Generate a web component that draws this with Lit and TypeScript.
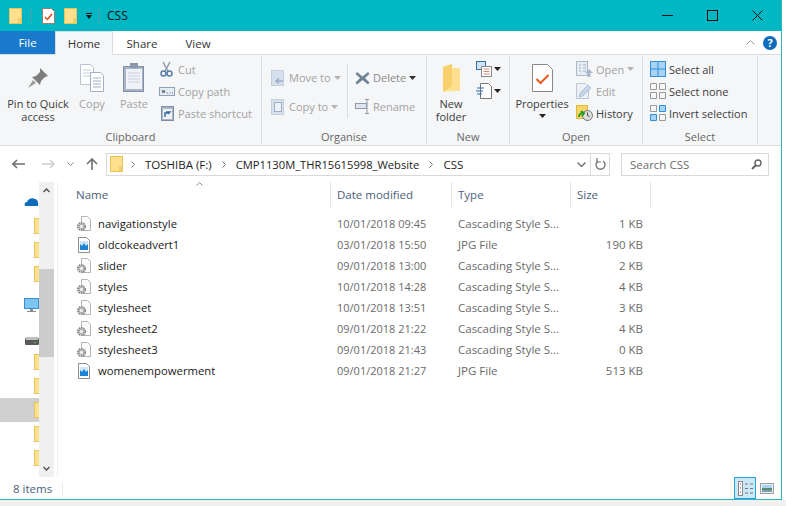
import { LitElement, html, css, svg } from 'lit'
import { customElement } from 'lit/decorators.js'

const icon = (w: number, h: number, body: unknown) => html`<svg class="ic" width=${w} height=${h} viewBox="0 0 ${w} ${h}">${body}</svg>`

const folderFlat = (w = 13, h = 16) => icon(w, h, svg`
  <rect x=".5" y=".5" width=${w - 1} height=${h - 1} fill="#ffe08f" stroke="#e9c35a"/>
  <rect x=${w - 4} y=${h - 6} width="3" height="5" fill="#f3cf6b"/>`)

const gearFile = icon(16, 16, svg`
  <path d="M5.500.5h6l3 3v11h-9z" fill="#fbfbfb" stroke="#b4b4b4"/>
  <circle cx="5.500" cy="10.500" r="3.600" fill="none" stroke="#8b8b8b" stroke-width="2" stroke-dasharray="1.600 .7"/>
  <circle cx="5.500" cy="10.500" r="2.400" fill="#e8e8e8" stroke="#8f8f8f" stroke-width=".8"/>`)

const jpgFile = icon(16, 16, svg`
  <path d="M2.500.5h8l3 3v12h-11z" fill="#fff" stroke="#8e8e8e"/>
  <rect x="4" y="4" width="8" height="9" fill="#1b82d6"/>
  <path d="M4 7l2 2 2-3 2 3 2-2v-3h-8z" fill="#cfe7fa"/>`)

const files = [
  { name: 'navigationstyle', date: '10/01/2018 09:45', type: 'Cascading Style S...', size: '1 KB', ic: gearFile },
  { name: 'oldcokeadvert1', date: '03/01/2018 15:50', type: 'JPG File', size: '190 KB', ic: jpgFile },
  { name: 'slider', date: '09/01/2018 13:00', type: 'Cascading Style S...', size: '2 KB', ic: gearFile },
  { name: 'styles', date: '10/01/2018 14:28', type: 'Cascading Style S...', size: '4 KB', ic: gearFile },
  { name: 'stylesheet', date: '10/01/2018 13:51', type: 'Cascading Style S...', size: '3 KB', ic: gearFile },
  { name: 'stylesheet2', date: '09/01/2018 21:22', type: 'Cascading Style S...', size: '4 KB', ic: gearFile },
  { name: 'stylesheet3', date: '09/01/2018 21:43', type: 'Cascading Style S...', size: '0 KB', ic: gearFile },
  { name: 'womenempowerment', date: '09/01/2018 21:27', type: 'JPG File', size: '513 KB', ic: jpgFile },
]

const caret = (c = '#333') => icon(7, 4, svg`<path d="M0 0h7l-3.500 4z" fill=${c}/>`)

@customElement('app-root')
export class AppRoot extends LitElement {
  static styles = css`
    :host { display: block; width: 786px; height: 506px; background: #fff; font-family: "Open Sans", "Noto Sans", sans-serif; overflow: hidden; }
    .ic { display: block; flex: none; }
    .win { width: 782px; height: 500px; box-sizing: border-box; border-right: 1px solid #2bb5c4; border-bottom: 1px solid #2bb5c4; display: flex; flex-direction: column; background: #fff; }
    .bottom { height: 6px; background: #f0f0f0; }

    .title { height: 31px; flex: none; background: #00b7c3; display: flex; align-items: center; padding-left: 9px; color: #111; font-size: 12px; }
    .qsep { width: 1px; height: 13px; background: #5c9ea6; }
    .ctrls { margin-left: auto; display: flex; align-items: center; gap: 34px; padding-right: 18px; }

    .tabs { height: 23px; flex: none; display: flex; font-size: 11.5px; color: #333; position: relative; z-index: 1; }
    .tab { display: flex; align-items: center; justify-content: center; height: 24px; box-sizing: border-box; }
    .file { width: 55px; background: #1979ca; color: #fff; height: 23px; }
    .home { width: 58px; background: #f5f6f7; border: 1px solid #dadbdc; border-width: 0 1px 0 1px; box-shadow: inset 0 1px 0 #dadbdc; }
    .share { width: 58px; }
    .view { width: 54px; }
    .tabr { margin-left: auto; display: flex; align-items: center; gap: 8px; padding-right: 4px; height: 23px; }
    .help { width: 14px; height: 14px; border-radius: 50%; background: #0f6cbd; color: #fff; font-size: 11px; font-weight: 700; display: flex; align-items: center; justify-content: center; }

    .ribbon { height: 92px; flex: none; box-sizing: border-box; background: #f5f6f7; border-top: 1px solid #dadbdc; border-bottom: 1px solid #dadbdc; display: flex; font-size: 11px; color: #3c3c3c; }
    .group { display: flex; flex-direction: column; border-right: 1px solid #dadbdc; margin: 2px 0 1px; box-sizing: border-box; }
    .gbody { flex: 1; display: flex; min-height: 0; }
    .glabel { height: 14px; text-align: center; color: #666; line-height: 14px; }
    .big { display: flex; flex-direction: column; align-items: center; text-align: center; line-height: 13px; padding-top: 7px; white-space: nowrap; }
    .big .slot { height: 28px; display: flex; align-items: flex-end; justify-content: center; margin-bottom: 5px; }
    .off { color: #a2a2a2; }
    .stack { display: flex; flex-direction: column; padding-top: 1px; }
    .small { height: 22px; display: flex; align-items: center; gap: 3px; white-space: nowrap; }
    .small.tall { height: 29px; }
    .vsep { width: 1px; background: #dadbdc; margin: 7px 0 12px; flex: none; }

    .addr { height: 36px; flex: none; display: flex; align-items: center; padding: 0 0 0 12px; font-size: 11.5px; color: #222; }
    .box { height: 23px; box-sizing: border-box; border: 1px solid #d9d9d9; display: flex; align-items: center; flex: none; }
    .pathbox { width: 504px; margin-left: 8px; padding-left: 3px; }
    .search { width: 148px; margin-left: 11px; padding: 0 6px 0 8px; justify-content: space-between; color: #6d6d6d; }
    .crumbsep { margin: 0 10px; }
    .narrow { font-size: 11.2px; }

    .main { flex: 1; display: flex; min-height: 0; }
    .nav { width: 58px; flex: none; display: flex; box-sizing: border-box; border-right: 1px solid #f0f0f0; padding-right: 2px; }
    .tree { width: 39px; flex: none; overflow: hidden; display: flex; flex-direction: column; padding-top: 8px; box-sizing: border-box; }
    .tn { height: 24px; flex: none; display: flex; align-items: center; justify-content: flex-end; }
    .tn svg { margin-right: -8px; }
    .tn.wide svg { margin-right: 0; }
    .tn.sel { background: #d0d0d0; }
    .tn.mt { margin-top: 8px; }
    .tn.mt2 { margin-top: 11px; }
    .tn.mb { margin-bottom: -3px; }
    .sb { width: 15px; flex: none; background: #f0f0f0; display: flex; flex-direction: column; align-items: center; }
    .sbarrow { height: 17px; flex: none; display: flex; align-items: center; justify-content: center; }
    .sbtrack { flex: 1; width: 100%; padding-top: 70px; box-sizing: border-box; }
    .thumb { height: 88px; background: #cdcdcd; }

    .list { flex: 1; font-size: 11.5px; color: #6a6a6a; position: relative; }
    .cols { display: grid; grid-template-columns: 273px 121px 119px 80px; }
    .head { height: 25px; color: #4c607a; font-size: 11.5px; }
    .head > div { border-right: 1px solid #e5e5e5; padding-left: 6px; display: flex; align-items: center; box-sizing: border-box; }
    .head > div:first-child { padding-left: 18px; }
    .sort { position: absolute; left: 138px; top: 0; }
    .rows { padding-top: 6px; }
    .row { height: 21px; align-items: center; }
    .row > div { padding-left: 6px; white-space: nowrap; }
    .row .dt { font-size: 11px; }
    .row .nm { padding-left: 18px; display: flex; align-items: center; gap: 6px; color: #1a1a1a; font-size: 11.3px; }
    .row .sz { text-align: right; padding: 0 8px 0 0; }

    .status { height: 22px; flex: none; display: flex; align-items: center; font-size: 11.5px; color: #4c607a; padding-left: 13px; }
    .ssep { width: 1px; height: 13px; background: #ececec; margin-left: 10px; }
    .views { margin-left: auto; display: flex; align-items: flex-end; height: 100%; padding-right: 7px; gap: 4px; }
    .vbtn { width: 22px; height: 22px; box-sizing: border-box; border: 1px solid #26a0da; background: #cbe8f6; display: flex; align-items: center; justify-content: center; }
    .vthumb { height: 22px; display: flex; align-items: center; }
  `

  render() {
    return html`
      <div class="win">
        ${this.titleBar()}
        ${this.tabs()}
        ${this.ribbon()}
        ${this.addressBar()}
        <div class="main">
          ${this.navPane()}
          ${this.fileList()}
        </div>
        ${this.statusBar()}
      </div>
      <div class="bottom"></div>
    `
  }

  titleBar() {
    return html`<div class="title">
      ${folderFlat()}
      <div class="qsep" style="margin:0 11px 0 8px"></div>
      ${icon(13, 16, svg`<path d="M.5.5h9l3 3v12h-12z" fill="#fff" stroke="#9a7b70"/><path d="M3 9l2.500 2.500L10 6" fill="none" stroke="#e2491a" stroke-width="1.500"/>`)}
      <div style="width:9px"></div>
      ${folderFlat()}
      <div style="width:9px"></div>
      ${icon(6, 6, svg`<path d="M0 0h6v1h-6zM0 2h6l-3 4z" fill="#111"/>`)}
      <div class="qsep" style="margin:0 7px 0 7px"></div>
      <span>CSS</span>
      <div class="ctrls">
        ${icon(11, 1, svg`<rect width="11" height="1" fill="#111"/>`)}
        ${icon(11, 11, svg`<rect x=".5" y=".5" width="10" height="10" fill="none" stroke="#111"/>`)}
        ${icon(11, 11, svg`<path d="M.5.5l10 10M10.500.5l-10 10" stroke="#111" fill="none"/>`)}
      </div>
    </div>`
  }

  tabs() {
    return html`<div class="tabs">
      <div class="tab file">File</div>
      <div class="tab home">Home</div>
      <div class="tab share">Share</div>
      <div class="tab view">View</div>
      <div class="tabr">
        ${icon(9, 5, svg`<path d="M.5 4.500l4-4 4 4" fill="none" stroke="#9a9a9a"/>`)}
        <div class="help">?</div>
      </div>
    </div>`
  }

  ribbon() {
    return html`<div class="ribbon">
      <div class="group" style="width:262px">
        <div class="gbody">
          <div class="big" style="width:76px">
            <div class="slot" style="align-items:center">${icon(22, 22, svg`<path d="M13 1l8 8-3 1-4 4-1 4-8-8 4-1 4-4z" fill="#7d7d7d"/><path d="M6 13l-5 8 8-5z" fill="#9a9a9a"/>`)}</div>
            Pin to Quick<br />access
          </div>
          <div class="big off" style="width:32px">
            <div class="slot">${icon(25, 28, svg`<path d="M.5.5h10l3 3v17h-13z" fill="#fff" stroke="#b9c4d6"/><path d="M3 6h8M3 9h8M3 12h8" stroke="#c6d0de"/><path d="M10.500 8.500h10l3 3v16h-13z" fill="#fff" stroke="#9fb0c9"/><path d="M13 14h8M13 17h8M13 20h8M13 23h8" stroke="#9fb0c9"/>`)}</div>
            Copy
          </div>
          <div class="big off" style="width:52px">
            <div class="slot">${icon(22, 29, svg`<rect x=".5" y="3.500" width="20" height="25" fill="#a9b4c6" stroke="#7f8ea6"/><rect x="3" y="6" width="16" height="20" fill="#f0f2f7"/><path d="M5 10h12M5 13h12M5 16h12M5 19h12" stroke="#c8d0de"/><rect x="7" y="0" width="8" height="5" fill="#8b97aa"/>`)}</div>
            Paste
          </div>
          <div class="stack off" style="margin-left:-1px">
            <div class="small">${icon(16, 16, svg`<path d="M4 1l5 9M11 1l-5 9" stroke="#8f9aa8" stroke-width="1.500" fill="none"/><circle cx="4.500" cy="12.500" r="2.500" fill="none" stroke="#5a7ea6" stroke-width="1.500"/><circle cx="10.500" cy="12.500" r="2.500" fill="none" stroke="#5a7ea6" stroke-width="1.500"/>`)}<span>Cut</span></div>
            <div class="small">${icon(16, 9, svg`<rect x=".5" y=".5" width="15" height="8" fill="#e6ecf4" stroke="#8fa0b6"/><path d="M3 3l1 3 1-3 1 3M8 6h1M10.500 6h1M13 6h1" stroke="#5f7590" fill="none"/>`)}<span>Copy path</span></div>
            <div class="small">${icon(16, 16, svg`<rect x="2.500" y="1.500" width="12" height="14" fill="#a9b4c6" stroke="#7f8ea6"/><rect x="4" y="4" width="9" height="10" fill="#f0f2f7"/><path d="M6 12V8h4M7 7l4 0-2 2" fill="none" stroke="#3a6ea5" stroke-width="1.500"/>`)}<span>Paste shortcut</span></div>
          </div>
        </div>
        <div class="glabel">Clipboard</div>
      </div>
      <div class="group" style="width:165px">
        <div class="gbody">
          <div class="stack off" style="width:76px;padding:6px 0 0 9px;box-sizing:content-box">
            <div class="small tall">${icon(13, 16, svg`<rect x=".5" y=".5" width="12" height="15" fill="#d6e0ec" stroke="#c3cfde"/><path d="M12 11H6M8 8.500l-3 2.500 3 2.500" fill="none" stroke="#9aaec6" stroke-width="1.500"/>`)}<span style="margin-left:2px">Move to</span>${caret('#b5b5b5')}</div>
            <div class="small tall">${icon(13, 16, svg`<rect x=".5" y=".5" width="12" height="15" fill="#d6e0ec" stroke="#c3cfde"/><rect x="3.500" y="3.500" width="7" height="9" fill="#eef2f7" stroke="#9aaec6"/>`)}<span style="margin-left:2px">Copy to</span>${caret('#b5b5b5')}</div>
          </div>
          <div class="vsep"></div>
          <div class="stack" style="padding:6px 0 0 7px">
            <div class="small tall">${icon(15, 14, svg`<path d="M2 1l5.500 4.500L13 1l1.500 2-4.500 4 4.500 4.500-1.500 2-5.500-4.500L2 13.500 .5 11.500 5 7 .5 3z" fill="#6f8296"/>`)}<span style="color:#8a8a8a">Delete</span>${caret('#333')}</div>
            <div class="small tall off">${icon(15, 15, svg`<rect x=".5" y="4.500" width="11" height="5" fill="#dfe5ec" stroke="#8f9aa8"/><path d="M10 .5h4M12 .5v14M10 14.500h4" stroke="#8f9aa8" fill="none"/>`)}<span>Rename</span></div>
          </div>
        </div>
        <div class="glabel">Organise</div>
      </div>
      <div class="group" style="width:83px">
        <div class="gbody">
          <div class="big" style="width:48px">
            <div class="slot">${icon(19, 28, svg`<path d="M1 3l9-3v4h8v23H7l-6 1z" fill="#ffe08f"/><path d="M10 0v22l-9 6V3z" fill="#f7cf6b"/>`)}</div>
            New<br />folder
          </div>
          <div class="stack" style="padding-left:1px">
            <div class="small" style="gap:2px">${icon(16, 16, svg`<rect x=".5" y=".5" width="9" height="8" fill="#cfe3f7" stroke="#3a6ea5"/><rect x="5.500" y="5.500" width="10" height="10" fill="#fff" stroke="#888"/><path d="M7.500 8h6M7.500 10.500h6M7.500 13h6" stroke="#d98a7a"/>`)}${caret('#222')}</div>
            <div class="small" style="gap:2px">${icon(16, 16, svg`<path d="M4.500.5h8l3 3v12h-11z" fill="#fff" stroke="#777"/><path d="M1 5h7M0 8h7M1 11h5" stroke="#2a6aa8"/>`)}${caret('#222')}</div>
          </div>
        </div>
        <div class="glabel">New</div>
      </div>
      <div class="group" style="width:133px">
        <div class="gbody">
          <div class="big" style="width:64px">
            <div class="slot">${icon(21, 28, svg`<path d="M.5.5h15l5 5v22h-20z" fill="#fff" stroke="#8a8a8a"/><path d="M4.500 15l4 4 8-8" fill="none" stroke="#e8591c" stroke-width="2"/>`)}</div>
            Properties
            <div style="margin-top:4px">${caret('#222')}</div>
          </div>
          <div class="stack" style="padding-left:2px">
            <div class="small off">${icon(17, 16, svg`<rect x=".5" y=".5" width="11" height="14" fill="#e8edf4" stroke="#a9b8cb"/><path d="M3 4h2M7 4h3M3 7h2M7 7h3M3 10h2M7 10h3" stroke="#9fb0c5"/><path d="M13 8l4 4h-2.500v4h-3v-4H9z" fill="#a9b8cb"/>`)}<span>Open</span>${caret('#b5b5b5')}</div>
            <div class="small off">${icon(17, 16, svg`<path d="M.5.5h9l3 3v12h-12z" fill="#eef2f7" stroke="#b9c6d8"/><path d="M3 14l1-4 8-8 3 3-8 8z" fill="#c6d6e8" stroke="#9fb5cf" stroke-width=".7"/>`)}<span>Edit</span></div>
            <div class="small">${icon(17, 16, svg`<rect x=".5" y=".5" width="11" height="13" fill="#f7d768" stroke="#e0b93f"/><circle cx="11.500" cy="10.500" r="5" fill="#ddd" stroke="#777"/><path d="M11.500 7.500v3l2 1" stroke="#444" fill="none"/><path d="M3 12a4 4 0 0 1 5-4M5 6l3 2-2 3" fill="none" stroke="#2a9a2a" stroke-width="2"/>`)}<span>History</span></div>
          </div>
        </div>
        <div class="glabel">Open</div>
      </div>
      <div class="group" style="width:115px">
        <div class="gbody">
          <div class="stack" style="padding-left:7px">
            <div class="small">${icon(16, 16, svg`<rect x=".5" y=".5" width="15" height="15" fill="#a9d3f5" stroke="#2f8fdc"/><path d="M8 0v16M0 8h16" stroke="#2f8fdc"/>`)}<span>Select all</span></div>
            <div class="small">${icon(16, 16, svg`<path d="M.5.5h6v6h-6zM9.500.5h6v6h-6zM.5 9.500h6v6h-6zM9.500 9.500h6v6h-6z" fill="none" stroke="#9a9a9a"/>`)}<span>Select none</span></div>
            <div class="small">${icon(16, 16, svg`<path d="M.5.500h6v6h-6zM9.500 9.500h6v6h-6z" fill="none" stroke="#9a9a9a"/><path d="M9.500.5h6v6h-6zM.5 9.500h6v6h-6z" fill="#a9d3f5" stroke="#2f8fdc"/>`)}<span>Invert selection</span></div>
          </div>
        </div>
        <div class="glabel">Select</div>
      </div>
    </div>`
  }

  addressBar() {
    const chev = html`<span class="crumbsep">${icon(4, 7, svg`<path d="M.5.5l3 3-3 3" fill="none" stroke="#777"/>`)}</span>`
    return html`<div class="addr">
      ${icon(13, 10, svg`<path d="M13 5H1M5 1L1 5l4 4" fill="none" stroke="#6f6f6f" stroke-width="1.600"/>`)}
      <div style="width:17px"></div>
      ${icon(13, 10, svg`<path d="M0 5h12M8 1l4 4-4 4" fill="none" stroke="#d0d0d0" stroke-width="1.600"/>`)}
      <div style="width:12px"></div>
      ${icon(7, 4, svg`<path d="M.5.5l3 3 3-3" fill="none" stroke="#8a8a8a"/>`)}
      <div style="width:12px"></div>
      ${icon(12, 12, svg`<path d="M6 12V1M1 6l5-5 5 5" fill="none" stroke="#6f6f6f" stroke-width="1.600"/>`)}
      <div class="box pathbox">
        ${folderFlat(13, 16)}
        <span style="width:0;margin-left:-2px"></span>
        ${chev}<span>TOSHIBA (F:)</span>
        ${chev}<span class="narrow">CMP1130M_THR15615998_Website</span>
        ${chev}<span>CSS</span>
        <span style="margin-left:auto;display:flex;align-items:center;height:100%">
          ${icon(9, 5, svg`<path d="M.5.5l4 4 4-4" fill="none" stroke="#666" stroke-width="1.200"/>`)}
          <span style="width:1px;height:100%;background:#d9d9d9;margin:0 4px"></span>
          ${icon(11, 12, svg`<path d="M3 3a4.500 4.500 0 1 0 5 0" fill="none" stroke="#777" stroke-width="1.400"/><path d="M2 0v4h4" fill="none" stroke="#777" stroke-width="1.200"/>`)}
          <span style="width:3px"></span>
        </span>
      </div>
      <div class="box search">
        <span>Search CSS</span>
        ${icon(11, 11, svg`<circle cx="7" cy="4" r="3" fill="none" stroke="#666" stroke-width="1.400"/><path d="M5 6l-4 4" stroke="#666" stroke-width="2"/>`)}
      </div>
    </div>`
  }

  navPane() {
    const folder = icon(13, 16, svg`<rect x=".5" y=".5" width="12" height="15" fill="#ffe08f" stroke="#e9c35a"/>`)
    return html`<div class="nav">
      <div class="tree">
        <div class="tn wide">${icon(15, 10, svg`<path d="M1 9c-1-2 0-4 2-4 1-3 5-5 8-3 2 0 4 3 3 7z" fill="#0f6cbd"/>`)}</div>
        <div class="tn">${folder}</div>
        <div class="tn">${folder}</div>
        <div class="tn">${folder}</div>
        <div class="tn mt wide">${icon(15, 16, svg`<rect x=".5" y=".5" width="14" height="10" fill="#7cc4f2" stroke="#3a90cf"/><rect x="6" y="11" width="3" height="2" fill="#8a8a8a"/><rect x="3" y="13" width="9" height="1" fill="#8a8a8a"/>`)}</div>
        <div class="tn mt2 mb wide">${icon(14, 8, svg`<rect x="0" y="1" width="14" height="7" rx="1" fill="#5a5a5a"/><rect x="1" y="0" width="12" height="3" fill="#c0c0c0"/><rect x="9" y="5" width="2" height="1" fill="#4cd04c"/>`)}</div>
        <div class="tn">${folder}</div>
        <div class="tn">${folder}</div>
        <div class="tn sel">${folder}</div>
        <div class="tn">${folder}</div>
        <div class="tn">${folder}</div>
      </div>
      <div class="sb">
        <div class="sbarrow">${icon(7, 5, svg`<path d="M.5 4l3-3 3 3" fill="none" stroke="#555" stroke-width="1.500"/>`)}</div>
        <div class="sbtrack"><div class="thumb"></div></div>
        <div class="sbarrow">${icon(7, 5, svg`<path d="M.5 1l3 3 3-3" fill="none" stroke="#555" stroke-width="1.500"/>`)}</div>
      </div>
    </div>`
  }

  fileList() {
    return html`<div class="list">
      <div class="sort">${icon(7, 4, svg`<path d="M.5 3.500l3-3 3 3" fill="none" stroke="#888"/>`)}</div>
      <div class="cols head">
        <div>Name</div><div>Date modified</div><div>Type</div><div>Size</div>
      </div>
      <div class="rows">
        ${files.map(f => html`<div class="cols row">
          <div class="nm">${f.ic}<span>${f.name}</span></div>
          <div class="dt">${f.date}</div>
          <div>${f.type}</div>
          <div class="sz">${f.size}</div>
        </div>`)}
      </div>
    </div>`
  }

  statusBar() {
    return html`<div class="status">
      <span>8 items</span>
      <div class="ssep"></div>
      <div class="views">
        <div class="vbtn">${icon(15, 15, svg`<rect x=".5" y=".5" width="4" height="14" fill="#fff" stroke="#888"/><path d="M2 3h1M2 7h1M2 11h1" stroke="#b33"/><path d="M7 3h3M12 3h3M7 7.500h3M12 7.500h3M7 12h3M12 12h3" stroke="#777"/>`)}</div>
        <div class="vthumb">${icon(14, 11, svg`<rect x=".5" y=".5" width="13" height="10" fill="#e4f1fb" stroke="#a0a0a0"/><rect x="2" y="2" width="10" height="3" fill="#a8d4ee"/><rect x="2" y="5" width="10" height="2" fill="#5b8a6a"/><rect x="2" y="7" width="10" height="2" fill="#7d9fb3"/>`)}</div>
      </div>
    </div>`
  }
}
